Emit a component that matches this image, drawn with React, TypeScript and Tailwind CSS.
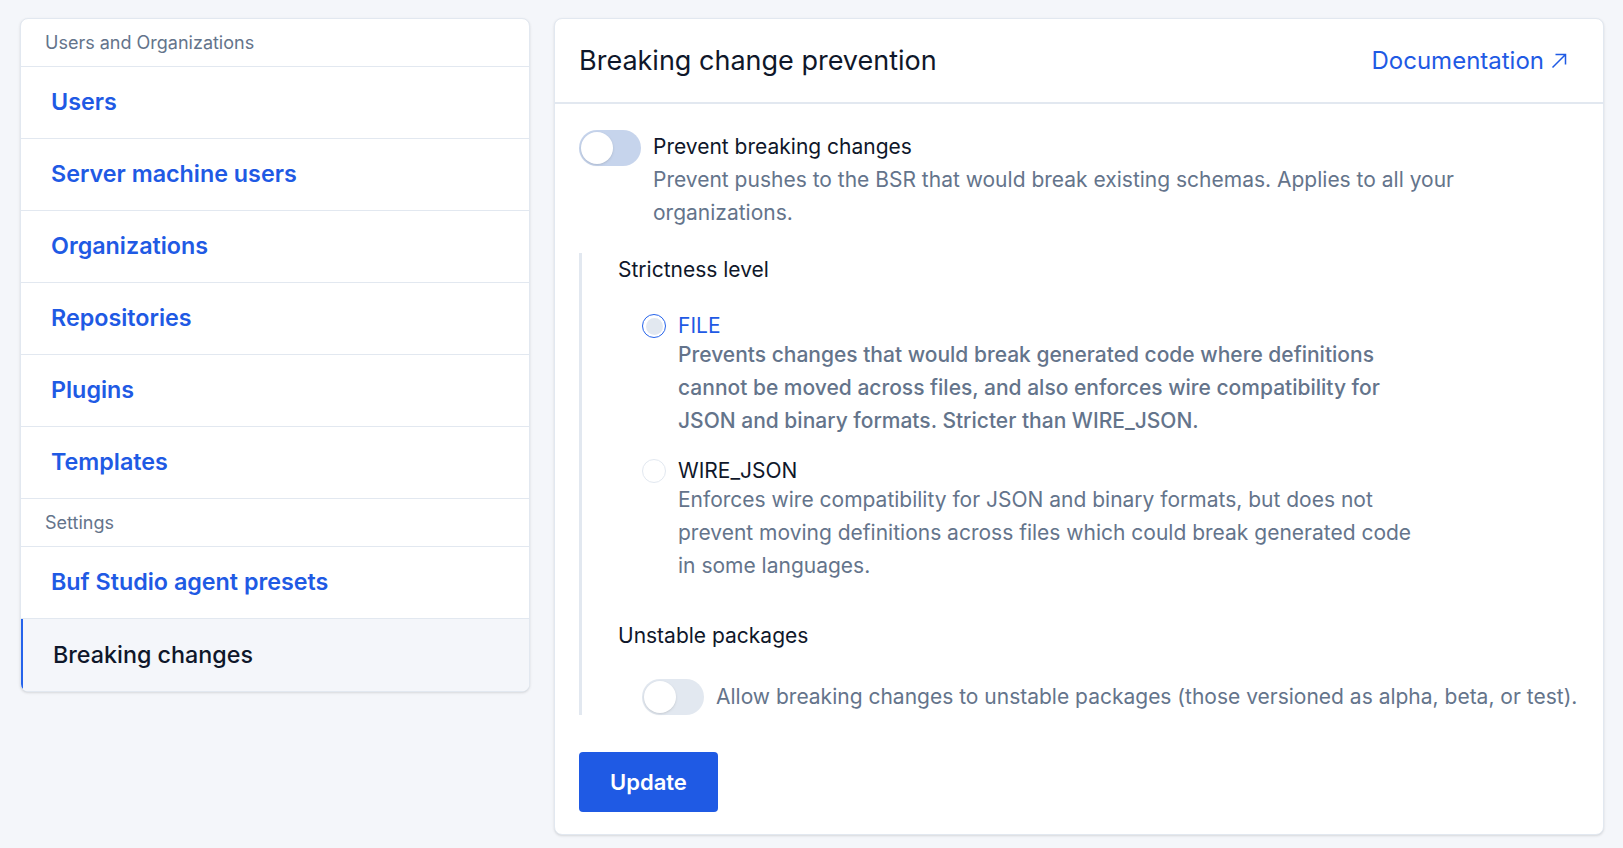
import { useState } from 'react'

type NavItem = { label: string; header?: boolean; active?: boolean }

const nav: NavItem[] = [
  { label: 'Users and Organizations', header: true },
  { label: 'Users' },
  { label: 'Server machine users' },
  { label: 'Organizations' },
  { label: 'Repositories' },
  { label: 'Plugins' },
  { label: 'Templates' },
  { label: 'Settings', header: true },
  { label: 'Buf Studio agent presets' },
  { label: 'Breaking changes', active: true },
]

const levels = [
  {
    value: 'FILE',
    desc: 'Prevents changes that would break generated code where definitions cannot be moved across files, and also enforces wire compatibility for JSON and binary formats. Stricter than WIRE_JSON.',
  },
  {
    value: 'WIRE_JSON',
    desc: 'Enforces wire compatibility for JSON and binary formats, but does not prevent moving definitions across files which could break generated code in some languages.',
  },
]

function Toggle({ on, tint }: { on: boolean; tint: string }) {
  return (
    <span className={`relative inline-flex h-9 w-[62px] shrink-0 items-center rounded-full ${tint}`}>
      <span
        className={`h-8 w-8 rounded-full bg-white shadow-sm transition ${on ? 'translate-x-[28px]' : 'translate-x-[2px]'}`}
      />
    </span>
  )
}

export default function App() {
  const [level, setLevel] = useState('FILE')

  return (
    <div className="min-h-screen bg-[#f4f6fa] font-['Inter',sans-serif]">
      <div className="flex gap-6 pl-5 pr-[19px] pt-[18px]">
        <aside className="w-[510px] shrink-0 self-start overflow-hidden rounded-lg border border-[#e2e8f0] bg-white shadow-sm">
          {nav.map((n, i) =>
            n.header ? (
              <div key={i} className="flex h-[48px] items-center border-b border-[#e2e8f0] pl-6 text-lg text-[#64748b]">
                {n.label}
              </div>
            ) : (
              <div
                key={i}
                className={`flex h-[72px] items-center pl-[30px] text-[23.3px] ${
                  n.active
                    ? 'border-l-2 border-[#2563eb] bg-[#f4f6fa] pl-[28px] font-medium text-[#0f172a]'
                    : 'border-b border-[#e2e8f0] font-semibold text-[#1f5ae4]'
                }`}
              >
                {n.label}
              </div>
            ),
          )}
        </aside>

        <section className="flex-1 rounded-lg border border-[#e2e8f0] bg-white shadow-sm">
          <div className="flex h-[85px] items-center justify-between border-b-2 border-[#e2e8f0] pl-6 pr-9">
            <h1 className="pt-[2px] text-[27px] text-[#0f172a]">Breaking change prevention</h1>
            <a className="flex items-center gap-[7px] text-2xl text-[#1f5ae4]" href="#">
              Documentation
              <svg width="16" height="16" viewBox="0 0 16 16" fill="none" stroke="currentColor" strokeWidth="1.5">
                <path d="M1.5 14.5 14.5 1.5M4.5 1.5h10v10" />
              </svg>
            </a>
          </div>

          <div className="px-6 pb-[22px] pt-[26px] text-[21px]">
            <div className="flex gap-3">
              <Toggle on={false} tint="bg-[#c6d4ec]" />
              <div className="max-w-[880px] leading-[33px]">
                <div className="text-[#0f172a]">Prevent breaking changes</div>
                <p className="text-[#64748b]">
                  Prevent pushes to the BSR that would break existing schemas. Applies to all your organizations.
                </p>
              </div>
            </div>

            <div className="mt-6 border-l-[3px] border-[#e2e8f0] pl-9">
              <div className="leading-[33px] text-[#0f172a]">Strictness level</div>
              <div className="mt-[28px] space-y-[22px] pl-6">
                {levels.map(l => {
                  const sel = level === l.value
                  return (
                    <label key={l.value} className="flex cursor-pointer gap-3" onClick={() => setLevel(l.value)}>
                      <span
                        className={`flex h-6 w-6 shrink-0 items-center justify-center rounded-full border bg-white ${
                          sel ? 'border-[1.5px] border-[#2563eb]' : 'border-[#e2e8f0]'
                        }`}
                      >
                        {sel && <span className="h-[17px] w-[17px] rounded-full bg-[#e2e8f0]" />}
                      </span>
                      <span className="max-w-[745px]">
                        <span className={`block leading-6 ${sel ? 'text-[#1f5ae4]' : 'text-[#0f172a]'}`}>{l.value}</span>
                        <span className={`block leading-[33px] text-[#64748b] ${sel ? 'font-medium' : ''}`}>{l.desc}</span>
                      </span>
                    </label>
                  )
                })}
              </div>

              <div className="mt-[37px] leading-[33px] text-[#0f172a]">Unstable packages</div>
              <div className="mt-[27px] flex items-center gap-3 pl-6">
                <Toggle on={false} tint="bg-[#e2e8f0]" />
                <span className="text-[#64748b]">
                  Allow breaking changes to unstable packages (those versioned as alpha, beta, or test).
                </span>
              </div>
            </div>

            <button className="mt-[37px] h-[60px] rounded bg-[#1f5ae4] px-[31px] text-[22px] font-semibold text-white">
              Update
            </button>
          </div>
        </section>
      </div>
    </div>
  )
}
